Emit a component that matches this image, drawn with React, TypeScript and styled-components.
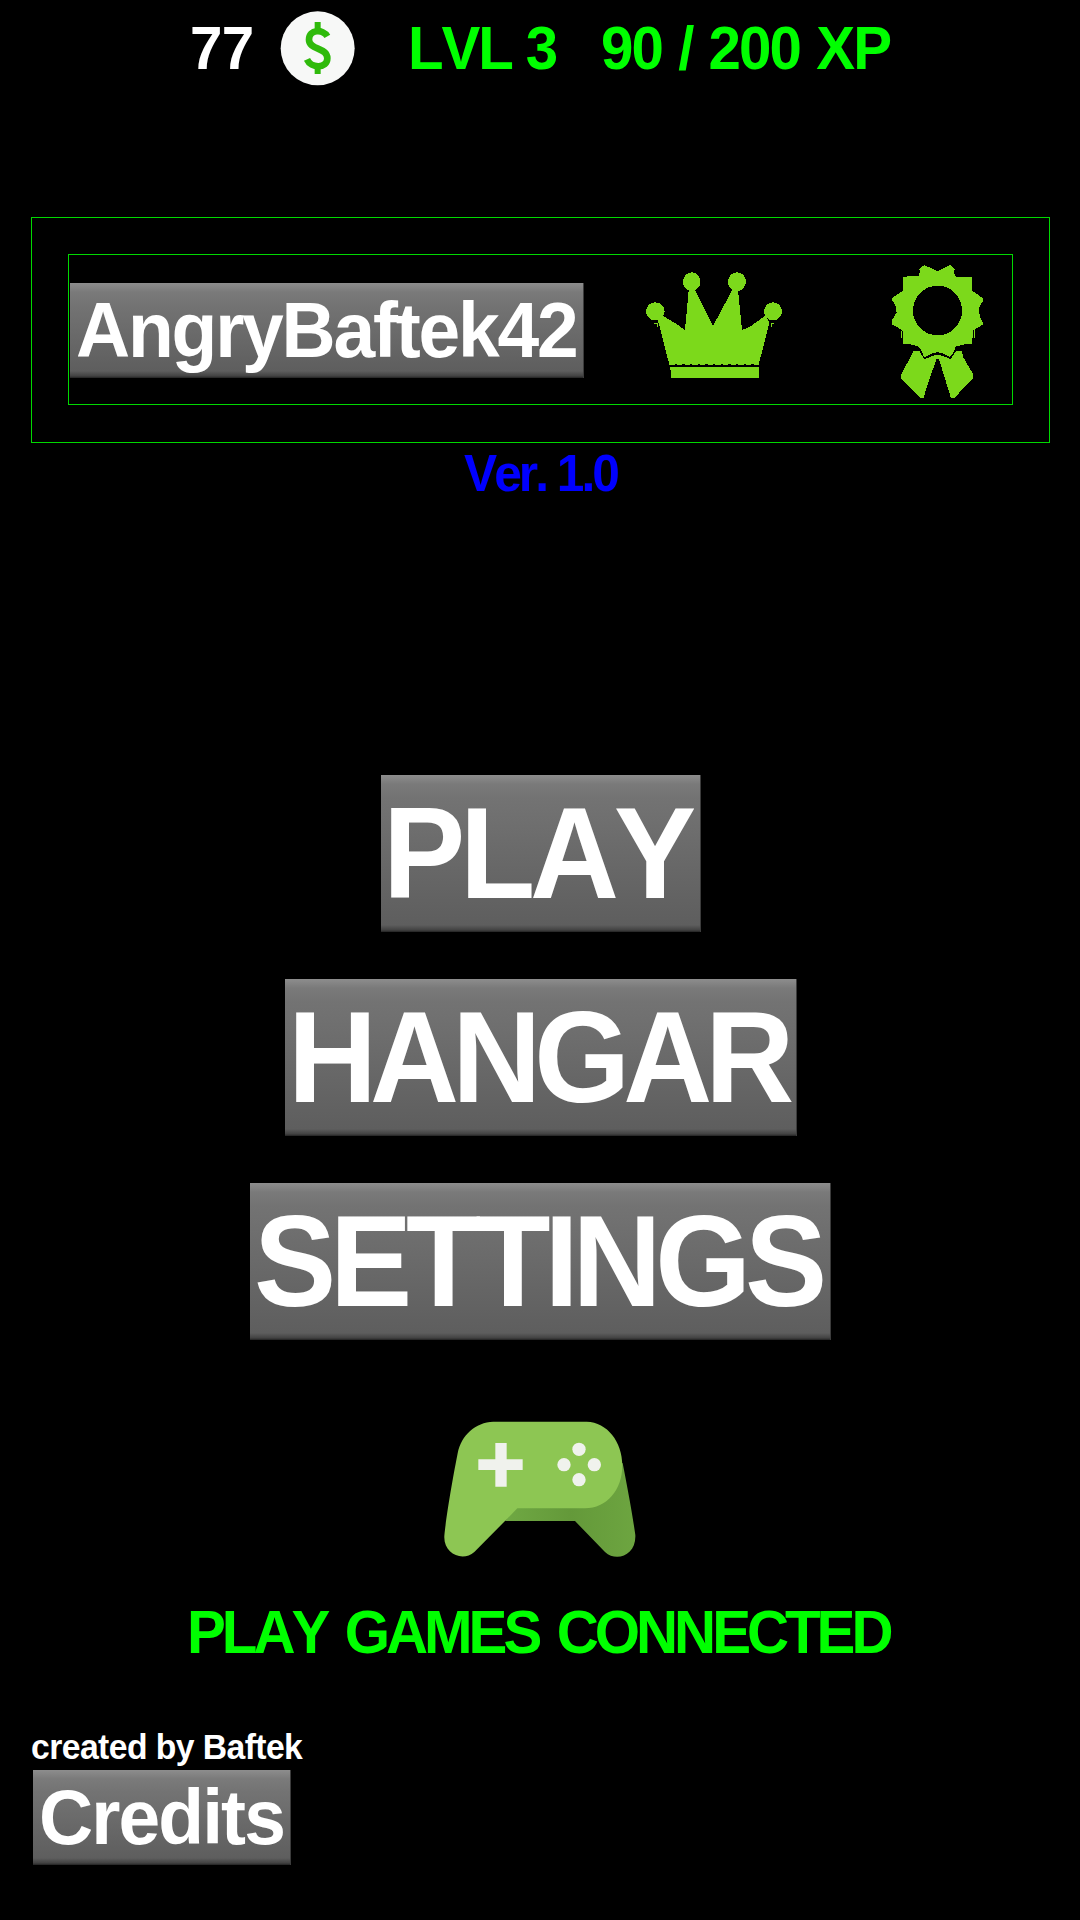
import React from "react";
import styled, { createGlobalStyle } from "styled-components";

const GlobalStyle = createGlobalStyle`
  * { box-sizing: border-box; }
  html, body { margin: 0; padding: 0; background: #000; }
`;

const Screen = styled.main`
  width: 1080px;
  height: 1920px;
  background: #000;
  display: flex;
  flex-direction: column;
  overflow: hidden;
  font-family: "Liberation Sans", Arial, Helvetica, sans-serif;
  font-weight: 700;
`;

interface LabelProps {
  $size: number;
  $line: number;
  $spacing: number;
  $words?: number;
  $width?: number;
  $color?: string;
}

const Label = styled.span<LabelProps>`
  display: block;
  flex: none;
  width: ${(p) => (p.$width ? `${p.$width}px` : "auto")};
  height: ${(p) => p.$line}px;
  line-height: ${(p) => p.$line}px;
  font-size: ${(p) => p.$size}px;
  letter-spacing: ${(p) => p.$spacing}px;
  word-spacing: ${(p) => p.$words ?? 0}px;
  color: ${(p) => p.$color ?? "#fff"};
  font-kerning: none;
  white-space: pre;
  transform: scaleX(0.955);
  transform-origin: left center;
`;

const StatusBar = styled.header`
  display: flex;
  align-items: center;
  height: 96px;
  padding-left: 190px;
`;

const CoinIcon = styled.svg`
  width: 75px;
  height: 77px;
  margin: 1px 53px 0 0;
`;

const ProfileFrame = styled.section`
  height: 226px;
  margin: 121px 30px 0 31px;
  padding: 36px;
  border: 1px solid #00d800;
`;

const ProfileRow = styled.div`
  display: flex;
  align-items: center;
  height: 151px;
  border: 1px solid #00d800;
  padding-left: 1px;
`;

const MenuButton = styled.button<{ $w: number; $h: number; $pad: number }>`
  display: flex;
  flex: none;
  align-items: flex-start;
  width: ${(p) => p.$w}px;
  height: ${(p) => p.$h}px;
  padding: 0 0 0 ${(p) => p.$pad}px;
  border: 0;
  border-radius: 0;
  font: inherit;
  text-align: left;
  background: linear-gradient(
    180deg,
    #8d8d8d 0,
    #7a7a7a 9px,
    #737373 22px,
    #5e5e5e calc(100% - 7px),
    #424242 calc(100% - 2px),
    #222 100%
  );
  box-shadow: inset -1px 0 0 #3c3c3c;
`;

const NameButton = styled(MenuButton)`
  margin-top: 2px;
`;

const CrownIcon = styled.svg`
  width: 136px;
  height: 106px;
  margin: 0 0 9px 62px;
`;

const RibbonIcon = styled.svg`
  width: 94px;
  height: 135px;
  margin: 4px 0 0 109px;
`;

const Version = styled.div`
  height: 61px;
  padding-left: 464px;
`;

const Menu = styled.nav`
  display: flex;
  flex-direction: column;
  align-items: center;
  gap: 47px;
  margin: 271px 0 0 1px;
`;

const PadIcon = styled.svg`
  flex: none;
  width: 194px;
  height: 138px;
  margin: 80px 0 0 443px;
`;

const Connection = styled.div`
  margin-top: 27px;
  padding-left: 187px;
`;

const Footer = styled.footer`
  display: flex;
  flex-direction: column;
  gap: 3px;
  margin-top: 48px;
  padding-left: 31px;
`;

const CreditsRow = styled.div`
  padding-left: 2px;
`;

const LIME = "#7cd91b";
const GREEN = "#00ff00";

const menu = [
  { text: "PLAY", width: 320, pad: 2, spacing: -5.4 },
  { text: "HANGAR", width: 512, pad: 3, spacing: -7.2 },
  { text: "SETTINGS", width: 581, pad: 4, spacing: -6.4 },
];

function Coin() {
  return (
    <CoinIcon viewBox="299 31 225 231">
      <circle cx="412" cy="146" r="111" fill="#f7f8f7" />
      <g fill="none" stroke="#2fba0b" strokeWidth="20">
        <path d="M412 67V98M412 196V223" strokeWidth="18" />
        <path d="M441 110C428 88 386 88 386 120C386 151 441 143 441 176C441 207 392 207 380 179" />
      </g>
    </CoinIcon>
  );
}

function Crown() {
  return (
    <CrownIcon viewBox="48 97 408 318" fill={LIME} shapeRendering="crispEdges">
      <ellipse cx="185" cy="126" rx="26" ry="28" />
      <ellipse cx="321" cy="126" rx="27" ry="28" />
      <ellipse cx="76" cy="215" rx="28" ry="27" />
      <ellipse cx="429" cy="215" rx="27" ry="27" />
      <path d="M82 236L101 230L144 256L165 271L176 152H196L249 259L306 152H324L336 271L362 260L408 226L418 250L386 375H118L88 258Z" />
      <path d="M73 251h9v10M432 251h-9v10" fill="none" stroke={LIME} strokeWidth="3" />
      <path d="M134 373.5H380" stroke="#000" strokeWidth="3" strokeDasharray="7 16" />
      <path d="M121 383H243V381H387V414H123Z" />
    </CrownIcon>
  );
}

function Ribbon() {
  return (
    <RibbonIcon viewBox="63 74 282 405" fill={LIME} shapeRendering="crispEdges">
      <path
        fillRule="evenodd"
        d="M203 96L240 77L254 90L252 102L258 114L305 112V153L339 177V187L330 198L326 214L332 238L341 254L308 274V291L305 315H285L257 322L252 337L240 353L203 339L163 355L153 332L145 321L120 315H100V280L93 270L66 255V242L80 220L76 196L66 184V176L100 153V112L145 110L150 98L148 88L163 77ZM203 139C162 139 129 172 129 214C129 255 162 288 203 288C244 288 276 255 276 214C276 172 244 139 203 139Z"
      />
      <path d="M131 334H147L163 359L200 346L206 346L242 359L257 336L274 334L281 356L309 404V416L252 477H243L207 360H199L175 430L160 477H151L94 417V404L121 354Z" />
      <path d="M163 356L182 346Q203 335 222 346L241 356" fill="none" stroke="#000" strokeWidth="3" />
      <path d="M93 274V296M313 272V296" fill="none" stroke={LIME} strokeWidth="3" />
    </RibbonIcon>
  );
}

function Gamepad() {
  return (
    <PadIcon viewBox="39 60 582 414">
      <defs>
        <linearGradient id="padShade" x1="0" y1="0" x2="1" y2="0">
          <stop offset="0" stopColor="#6fa843" />
          <stop offset="0.5" stopColor="#64993a" />
          <stop offset="1" stopColor="#6da540" />
        </linearGradient>
      </defs>
      <path
        d="M225 363L262 310L560 180L578 190C590 250 606 335 616 405C619 465 560 488 525 456L435 363Z"
        fill="url(#padShade)"
      />
      <path
        d="M190 65H470C532 67 577 125 577 196C577 270 530 325 465 325H262L225 363L133 456C98 487 40 462 43 408C48 350 72 215 83 160C94 105 136 67 190 65Z"
        fill="#8dc653"
      />
      <path d="M196 129H230V178H278V210H230V260H196V210H145V178H196Z" fill="#f0f2ed" />
      <g fill="#f0f2ed">
        <circle cx="447" cy="148" r="20" />
        <circle cx="402" cy="194" r="20" />
        <circle cx="493" cy="194" r="20" />
        <circle cx="447" cy="239" r="20" />
      </g>
    </PadIcon>
  );
}

export default function App() {
  return (
    <>
      <GlobalStyle />
      <Screen>
        <StatusBar>
          <Label $size={61} $line={96} $spacing={-0.6} $width={90}>77</Label>
          <Coin />
          <Label $size={61} $line={96} $spacing={-2.2} $width={193} $color={GREEN}>LVL 3</Label>
          <Label $size={61} $line={96} $spacing={-2} $words={2} $width={300} $color={GREEN}>90 / 200 XP</Label>
        </StatusBar>

        <ProfileFrame>
          <ProfileRow>
            <NameButton $w={514} $h={95} $pad={6}>
              <Label $size={78.5} $line={94} $spacing={-2.3}>AngryBaftek42</Label>
            </NameButton>
            <Crown />
            <Ribbon />
          </ProfileRow>
        </ProfileFrame>

        <Version>
          <Label $size={52} $line={61} $spacing={-3.1} $width={160} $color="#0000ff">Ver. 1.0</Label>
        </Version>

        <Menu>
          {menu.map((item) => (
            <MenuButton key={item.text} $w={item.width} $h={157} $pad={item.pad}>
              <Label $size={129} $line={156} $spacing={item.spacing}>{item.text}</Label>
            </MenuButton>
          ))}
        </Menu>

        <Gamepad />

        <Connection>
          <Label $size={61} $line={94} $spacing={-4.2} $words={6.5} $width={740} $color={GREEN}>PLAY GAMES CONNECTED</Label>
        </Connection>

        <Footer>
          <Label $size={35.3} $line={40} $spacing={-0.6} $width={290}>created by Baftek</Label>
          <CreditsRow>
            <MenuButton $w={258} $h={95} $pad={6}>
              <Label $size={78.5} $line={95} $spacing={-2}>Credits</Label>
            </MenuButton>
          </CreditsRow>
        </Footer>
      </Screen>
    </>
  );
}
